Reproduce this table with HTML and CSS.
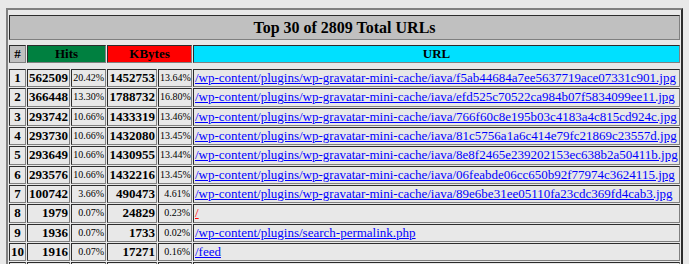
FILE: index.html
```html
<!DOCTYPE html>
<html>
<head>
<meta charset="utf-8">
<title>Top URLs</title>
<link rel="stylesheet" href="styles.css">
</head>
<body>
<table class="stats">
  <colgroup>
    <col class="c-rank">
    <col class="c-hits">
    <col class="c-hpct">
    <col class="c-kb">
    <col class="c-kpct">
    <col class="c-url">
  </colgroup>
  <tr class="spacer"><td colspan="6"></td></tr>
  <tr><th class="title" colspan="6">Top 30 of 2809 Total URLs</th></tr>
  <tr class="spacer"><td colspan="6"></td></tr>
  <tr class="head">
    <th class="h-rank">#</th>
    <th class="h-hits" colspan="2">Hits</th>
    <th class="h-kb" colspan="2">KBytes</th>
    <th class="h-url">URL</th>
  </tr>
  <tr class="spacer spacer-lg"><td colspan="6"></td></tr>
  <tr class="row">
    <td class="rank">1</td><td class="num">562509</td><td class="pct">20.42%</td><td class="num">1452753</td><td class="pct">13.64%</td>
    <td class="url"><a href="#">/wp-content/plugins/wp-gravatar-mini-cache/iava/f5ab44684a7ee5637719ace07331c901.jpg</a></td>
  </tr>
  <tr class="row">
    <td class="rank">2</td><td class="num">366448</td><td class="pct">13.30%</td><td class="num">1788732</td><td class="pct">16.80%</td>
    <td class="url"><a href="#">/wp-content/plugins/wp-gravatar-mini-cache/iava/efd525c70522ca984b07f5834099ee11.jpg</a></td>
  </tr>
  <tr class="row">
    <td class="rank">3</td><td class="num">293742</td><td class="pct">10.66%</td><td class="num">1433319</td><td class="pct">13.46%</td>
    <td class="url"><a href="#">/wp-content/plugins/wp-gravatar-mini-cache/iava/766f60c8e195b03c4183a4c815cd924c.jpg</a></td>
  </tr>
  <tr class="row">
    <td class="rank">4</td><td class="num">293730</td><td class="pct">10.66%</td><td class="num">1432080</td><td class="pct">13.45%</td>
    <td class="url"><a href="#">/wp-content/plugins/wp-gravatar-mini-cache/iava/81c5756a1a6c414e79fc21869c23557d.jpg</a></td>
  </tr>
  <tr class="row">
    <td class="rank">5</td><td class="num">293649</td><td class="pct">10.66%</td><td class="num">1430955</td><td class="pct">13.44%</td>
    <td class="url"><a href="#">/wp-content/plugins/wp-gravatar-mini-cache/iava/8e8f2465e239202153ec638b2a50411b.jpg</a></td>
  </tr>
  <tr class="row">
    <td class="rank">6</td><td class="num">293576</td><td class="pct">10.66%</td><td class="num">1432216</td><td class="pct">13.45%</td>
    <td class="url"><a href="#">/wp-content/plugins/wp-gravatar-mini-cache/iava/06feabde06cc650b92f77974c3624115.jpg</a></td>
  </tr>
  <tr class="row">
    <td class="rank">7</td><td class="num">100742</td><td class="pct">3.66%</td><td class="num">490473</td><td class="pct">4.61%</td>
    <td class="url"><a href="#">/wp-content/plugins/wp-gravatar-mini-cache/iava/89e6be31ee05110fa23cdc369fd4cab3.jpg</a></td>
  </tr>
  <tr class="row">
    <td class="rank">8</td><td class="num">1979</td><td class="pct">0.07%</td><td class="num">24829</td><td class="pct">0.23%</td>
    <td class="url"><a class="visited" href="#">/</a></td>
  </tr>
  <tr class="row">
    <td class="rank">9</td><td class="num">1936</td><td class="pct">0.07%</td><td class="num">1733</td><td class="pct">0.02%</td>
    <td class="url"><a href="#">/wp-content/plugins/search-permalink.php</a></td>
  </tr>
  <tr class="row">
    <td class="rank">10</td><td class="num">1916</td><td class="pct">0.07%</td><td class="num">17271</td><td class="pct">0.16%</td>
    <td class="url"><a href="#">/feed</a></td>
  </tr>
  <tr class="row">
    <td class="rank">11</td><td class="num">1888</td><td class="pct">0.07%</td><td class="num">855</td><td class="pct">0.01%</td>
    <td class="url"><a href="#">/wp-includes/js/l10n.js</a></td>
  </tr>
</table>
</body>
</html>
```

FILE: styles.css
```css
html {
  overflow: hidden;
}

body {
  margin: 8px 6px;
  background: #e8e8e8;
  color: #000;
  font-family: "Liberation Serif", "Times New Roman", serif;
}

.stats {
  width: 677px;
  table-layout: fixed;
  border-collapse: separate;
  border-spacing: 1px;
  border: 2px outset gray;
}

.c-rank { width: 17px; }
.c-hits { width: 43px; }
.c-hpct { width: 35px; }
.c-kb { width: 50px; }
.c-kpct { width: 34px; }

.stats th,
.stats td {
  border: 1px inset gray;
  padding: 1px;
  vertical-align: middle;
}

.stats .spacer td {
  border: none;
  padding: 0;
  height: 3px;
  line-height: 0;
  font-size: 0;
}

.stats .spacer-lg td {
  height: 4px;
}

.title {
  background: #c0c0c0;
  font-size: 16px;
  line-height: 21px;
  font-weight: bold;
  text-align: center;
}

.head th {
  font-size: 13px;
  line-height: 14px;
  font-weight: bold;
  text-align: center;
}

.h-rank { background: #c0c0c0; }
.h-hits { background: #008040; }
.h-kb { background: #ff0000; }
.h-url { background: #00e0ff; }

.row td {
  font-size: 13px;
  line-height: 14.33px;
  white-space: nowrap;
  overflow: hidden;
}

.rank {
  text-align: center;
  font-weight: bold;
}

.num {
  text-align: right;
  font-weight: bold;
}

.stats .pct {
  text-align: right;
  font-size: 10px;
}

.url {
  text-align: left;
}

.url a {
  color: #0000ff;
  text-decoration: underline;
}

.url a.visited {
  color: #ff0000;
}
```
